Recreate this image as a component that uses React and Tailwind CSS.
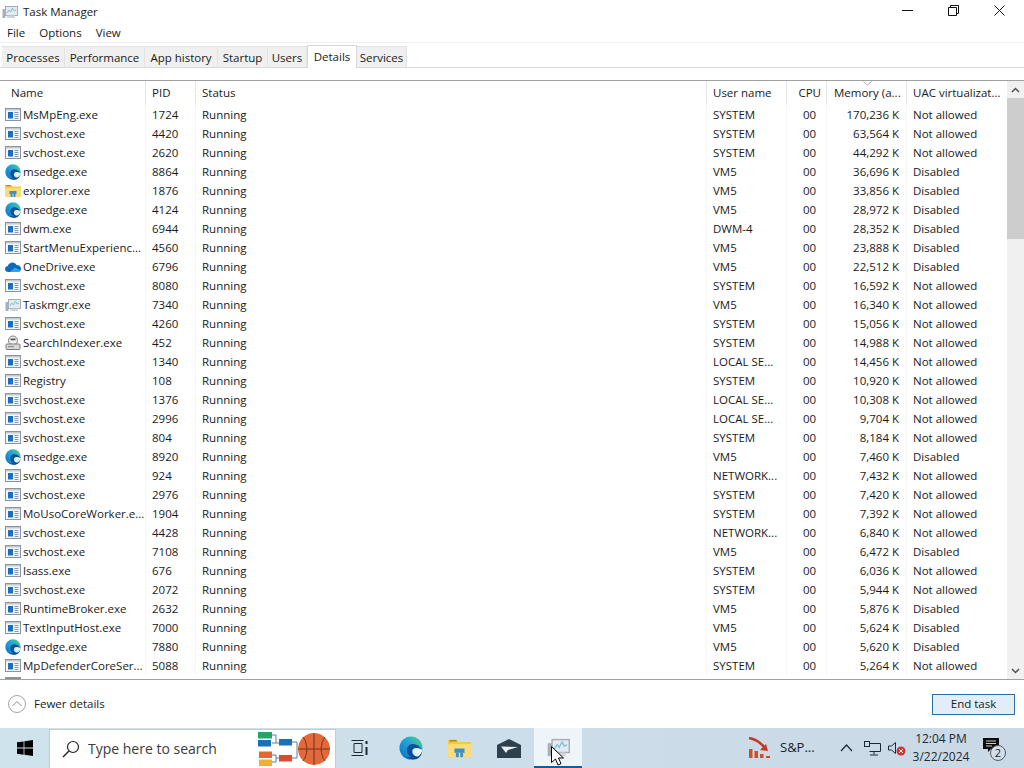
import React from 'react';

const rows = [
  ['MsMpEng.exe', '1724', 'SYSTEM', '170,236 K', 'Not allowed', 'exe'],
  ['svchost.exe', '4420', 'SYSTEM', '63,564 K', 'Not allowed', 'exe'],
  ['svchost.exe', '2620', 'SYSTEM', '44,292 K', 'Not allowed', 'exe'],
  ['msedge.exe', '8864', 'VM5', '36,696 K', 'Disabled', 'edge'],
  ['explorer.exe', '1876', 'VM5', '33,856 K', 'Disabled', 'folder'],
  ['msedge.exe', '4124', 'VM5', '28,972 K', 'Disabled', 'edge'],
  ['dwm.exe', '6944', 'DWM-4', '28,352 K', 'Disabled', 'exe'],
  ['StartMenuExperienc...', '4560', 'VM5', '23,888 K', 'Disabled', 'exe'],
  ['OneDrive.exe', '6796', 'VM5', '22,512 K', 'Disabled', 'cloud'],
  ['svchost.exe', '8080', 'SYSTEM', '16,592 K', 'Not allowed', 'exe'],
  ['Taskmgr.exe', '7340', 'VM5', '16,340 K', 'Not allowed', 'taskmgr'],
  ['svchost.exe', '4260', 'SYSTEM', '15,056 K', 'Not allowed', 'exe'],
  ['SearchIndexer.exe', '452', 'SYSTEM', '14,988 K', 'Not allowed', 'indexer'],
  ['svchost.exe', '1340', 'LOCAL SE...', '14,456 K', 'Not allowed', 'exe'],
  ['Registry', '108', 'SYSTEM', '10,920 K', 'Not allowed', 'exe'],
  ['svchost.exe', '1376', 'LOCAL SE...', '10,308 K', 'Not allowed', 'exe'],
  ['svchost.exe', '2996', 'LOCAL SE...', '9,704 K', 'Not allowed', 'exe'],
  ['svchost.exe', '804', 'SYSTEM', '8,184 K', 'Not allowed', 'exe'],
  ['msedge.exe', '8920', 'VM5', '7,460 K', 'Disabled', 'edge'],
  ['svchost.exe', '924', 'NETWORK...', '7,432 K', 'Not allowed', 'exe'],
  ['svchost.exe', '2976', 'SYSTEM', '7,420 K', 'Not allowed', 'exe'],
  ['MoUsoCoreWorker.e...', '1904', 'SYSTEM', '7,392 K', 'Not allowed', 'exe'],
  ['svchost.exe', '4428', 'NETWORK...', '6,840 K', 'Not allowed', 'exe'],
  ['svchost.exe', '7108', 'VM5', '6,472 K', 'Disabled', 'exe'],
  ['lsass.exe', '676', 'SYSTEM', '6,036 K', 'Not allowed', 'exe'],
  ['svchost.exe', '2072', 'SYSTEM', '5,944 K', 'Not allowed', 'exe'],
  ['RuntimeBroker.exe', '2632', 'VM5', '5,876 K', 'Disabled', 'exe'],
  ['TextInputHost.exe', '7000', 'VM5', '5,624 K', 'Disabled', 'exe'],
  ['msedge.exe', '7880', 'VM5', '5,620 K', 'Disabled', 'edge'],
  ['MpDefenderCoreSer...', '5088', 'SYSTEM', '5,264 K', 'Not allowed', 'exe'],
];

const tabs = [
  ['Processes', 'w-[63px]'],
  ['Performance', 'w-[80px]'],
  ['App history', 'w-[73px]'],
  ['Startup', 'w-[50px]'],
  ['Users', 'w-[39px]'],
  ['Details', 'w-[50px]'],
  ['Services', 'w-[50px]'],
];

const gridCols = 'grid grid-cols-[146px_50px_511px_80px_40px_80px_99px]';

function ExeIcon() {
  return (
    <svg width="16" height="13" viewBox="0 0 16 13">
      <rect x="0.5" y="0.5" width="15" height="12" fill="#f4f6f8" stroke="#8b949e" />
      <rect x="1" y="1" width="14" height="1.5" fill="#c3cad2" />
      <rect x="3" y="4" width="5" height="6.5" fill="#1b6ec2" />
      <path d="M9.5 4.500h4M9.5 6.500h4M9.5 8.500h4M9.5 10.500h4" stroke="#7e9bbc" />
    </svg>
  );
}

function EdgeIcon({ size = 16 }) {
  return (
    <svg width={size} height={size} viewBox="0 0 24 24">
      <defs>
        <linearGradient id="edgeBase" x1="0" y1="1" x2="1" y2="0">
          <stop offset="0" stopColor="#0f6fc0" />
          <stop offset="0.55" stopColor="#1fa3d8" />
          <stop offset="1" stopColor="#58d27a" />
        </linearGradient>
      </defs>
      <circle cx="12" cy="12" r="11.500" fill="url(#edgeBase)" />
      <path d="M8 14c0-4 3-6 6-6 3.500 0 7 2 9 6-3-2-7-3-9-1-2 2-1 6 3 8-4 2-9-1-9-7z" fill="#0d4f9c" />
      <path d="M23.500 14c-3-2-7-3-9-1-2 2-1 6 3 7.500 2.500.500 5-2 6-6.500z" fill="#e4f1f7" />
      <path d="M16 20.500c3 1 5.500-1 7.400-5.500-.8 5-4.400 8.500-8.400 8.500-3 0-6-1-8-3 3 1 6 1 9 0z" fill="#0f4a8c" />
    </svg>
  );
}

function FolderIcon({ size = 16 }) {
  return (
    <svg width={size} height={size} viewBox="0 0 16 16">
      <path d="M0 2h6l1.500 1.500H16V14H0z" fill="#f6c945" />
      <rect x="1" y="2" width="5" height="1.200" fill="#b5892a" />
      <rect x="0" y="5" width="16" height="9" fill="#fbdc7c" />
      <rect x="4.500" y="8" width="7" height="3" fill="#3d8fc6" />
      <rect x="5.500" y="11" width="2" height="3" fill="#3d8fc6" />
      <rect x="8.500" y="11" width="2" height="3" fill="#3d8fc6" />
    </svg>
  );
}

function CloudIcon() {
  return (
    <svg width="16" height="16" viewBox="0 0 16 16">
      <path d="M3.500 13C1.500 13 0 11.700 0 10s1.300-2.900 2.800-3C3.500 5 5.300 3.500 7.500 3.500c1.800 0 3.300 1 4 2.500 2.500-.1 4.500 1.500 4.500 3.700 0 1.900-1.500 3.300-3.500 3.300z" fill="#0f6cbd" />
      <path d="M5 13l5-4.500 5.500 3c-.6 1-1.700 1.500-3 1.500z" fill="#28a8ea" />
    </svg>
  );
}

function TaskmgrIcon({ size = 16 }) {
  return (
    <svg width={size} height={size} viewBox="0 0 16 16">
      <rect x="0.500" y="5" width="3" height="9" fill="#a7afb7" />
      <rect x="3.500" y="2.500" width="12" height="9" fill="#e4ebf0" stroke="#a5aeb7" />
      <path d="M5 9l2-3 1.500 2 2-4 1.500 3 2-1" fill="none" stroke="#7fc3d8" />
      <rect x="5" y="11.500" width="8" height="2.500" fill="#cfd6dc" />
    </svg>
  );
}

function IndexerIcon() {
  return (
    <svg width="16" height="16" viewBox="0 0 16 16">
      <circle cx="8" cy="5.500" r="4.500" fill="#f2f2f2" stroke="#7b7b7b" />
      <rect x="5.500" y="3.500" width="5" height="1.800" fill="#555" />
      <rect x="1" y="9" width="14" height="5.500" rx="1" fill="#d8d8d8" stroke="#7b7b7b" />
      <rect x="3" y="11" width="6" height="1.200" fill="#8d8d8d" />
    </svg>
  );
}

function ProcIcon({ kind }) {
  if (kind === 'edge') return <EdgeIcon />;
  if (kind === 'folder') return <FolderIcon />;
  if (kind === 'cloud') return <CloudIcon />;
  if (kind === 'taskmgr') return <TaskmgrIcon />;
  if (kind === 'indexer') return <IndexerIcon />;
  return <ExeIcon />;
}

function HeaderCell({ children, className = '' }) {
  return (
    <div className={`flex items-center h-full border-r border-[#e5e5e5] whitespace-nowrap ${className}`}>
      {children}
    </div>
  );
}

function Row({ row }) {
  return (
    <div className={`${gridCols} h-[19px] leading-[19px] shrink-0`}>
      <div className="flex items-center pl-[5px] border-r border-[#f6f6f6]">
        <span className="w-[18px] shrink-0 flex items-center justify-start"><ProcIcon kind={row[5]} /></span>
        <span className="whitespace-nowrap">{row[0]}</span>
      </div>
      <div className="pl-[6px] border-r border-[#f6f6f6]">{row[1]}</div>
      <div className="pl-[6px] border-r border-[#f6f6f6]">Running</div>
      <div className="pl-[6px] border-r border-[#f6f6f6] whitespace-nowrap">{row[2]}</div>
      <div className="text-center pl-[6px] border-r border-[#f6f6f6]">00</div>
      <div className="text-right pr-[7px] border-r border-[#f6f6f6]">{row[3]}</div>
      <div className="pl-[6px]">{row[4]}</div>
    </div>
  );
}

function Scrollbar() {
  return (
    <div className="w-[17px] shrink-0 ml-px bg-[#f0f0f0] flex flex-col">
      <div className="h-[17px] flex items-center justify-center">
        <svg width="9" height="6" viewBox="0 0 9 6"><path d="M1 5l3.500-3.500L8 5" fill="none" stroke="#505050" strokeWidth="1.500" /></svg>
      </div>
      <div className="h-[141px] bg-[#cdcdcd]" />
      <div className="flex-1" />
      <div className="h-[17px] flex items-center justify-center">
        <svg width="9" height="6" viewBox="0 0 9 6"><path d="M1 1l3.500 3.500L8 1" fill="none" stroke="#505050" strokeWidth="1.500" /></svg>
      </div>
    </div>
  );
}

function BracketIcon() {
  return (
    <svg width="44" height="34" viewBox="0 0 44 34">
      <rect x="0" y="0" width="14" height="6.500" fill="#2aa36b" />
      <rect x="0" y="8" width="13" height="6.500" fill="#1d6fb8" />
      <rect x="1" y="19.500" width="13" height="6.500" fill="#e8672c" />
      <rect x="1" y="27.500" width="13" height="6.500" fill="#efb02e" />
      <rect x="21" y="7" width="13" height="6.500" fill="#1d6fb8" />
      <rect x="21" y="23" width="13" height="6.500" fill="#e5472f" />
      <path d="M14 3h4v8h3M14 11h4M14 23h4v7h-4M18 26h3M34 10h5v16h-5" fill="none" stroke="#5f7f95" strokeWidth="1" />
    </svg>
  );
}

function BasketballIcon() {
  return (
    <svg width="34" height="34" viewBox="0 0 34 34">
      <circle cx="17" cy="17" r="16" fill="#e2693a" />
      <path d="M1 17h32M17 1v32M6 5c5 6 5 18 0 24M28 5c-5 6-5 18 0 24" fill="none" stroke="#7a3319" strokeWidth="1" />
    </svg>
  );
}

export default function App() {
  return (
    <div className="w-[1024px] h-[768px] overflow-hidden bg-white flex flex-col text-[11.5px] text-[#1a1a1a] relative font-['Open_Sans',sans-serif]">
      {/* title bar */}
      <div className="h-[23px] flex items-center shrink-0">
        <span className="pl-[2px] w-[23px]"><TaskmgrIcon /></span>
        <span>Task Manager</span>
        <div className="flex-1" />
        <div className="flex items-center pr-[2px] pb-[2px]">
          <span className="w-[46px] flex justify-center">
            <svg width="11" height="11" viewBox="0 0 11 11"><path d="M0 5.500h11" stroke="#111" /></svg>
          </span>
          <span className="w-[46px] flex justify-center">
            <svg width="11" height="11" viewBox="0 0 11 11"><path d="M.5 2.500h8v8h-8zM2.500 2.500v-2h8v8h-2" fill="none" stroke="#111" /></svg>
          </span>
          <span className="w-[46px] flex justify-center">
            <svg width="11" height="11" viewBox="0 0 11 11"><path d="M.5.500l10 10M10.500.500l-10 10" stroke="#111" /></svg>
          </span>
        </div>
      </div>

      {/* menu */}
      <div className="h-[20px] flex items-center pl-[7px] gap-[14px] pt-[1px] shrink-0 border-b border-[#f0f0f0]">
        <span>File</span>
        <span>Options</span>
        <span>View</span>
      </div>

      {/* tabs */}
      <div className="h-[25px] shrink-0 flex items-end pl-[2px] border-b border-[#d9d9d9]">
        {tabs.map(([label, width]) =>
          label === 'Details' ? (
            <div key={label} className={`${width} h-[23px] bg-white border border-b-0 border-[#d9d9d9] flex items-start justify-center pt-[2px] -mb-px`}>
              {label}
            </div>
          ) : (
            <div key={label} className={`${width} h-[21px] bg-[#f0f0f0] border-r border-t border-[#e3e3e3] flex items-center justify-center pt-[1px]`}>
              {label}
            </div>
          )
        )}
      </div>

      <div className="h-[12px] shrink-0" />

      {/* process table */}
      <div className="h-[600px] shrink-0 flex border-t border-b border-[#a0a0a0] overflow-hidden">
        <div className="flex-1 flex flex-col overflow-hidden">
          <div className={`${gridCols} h-[24px] shrink-0 relative`}>
            <HeaderCell className="pl-[11px]">Name</HeaderCell>
            <HeaderCell className="pl-[6px]">PID</HeaderCell>
            <HeaderCell className="pl-[6px]">Status</HeaderCell>
            <HeaderCell className="pl-[6px]">User name</HeaderCell>
            <HeaderCell className="justify-end pr-[5px]">CPU</HeaderCell>
            <HeaderCell className="pl-[7px]">Memory (a...</HeaderCell>
            <HeaderCell className="pl-[6px] border-r-0">UAC virtualizat...</HeaderCell>
            <svg className="absolute left-[863px] top-0" width="9" height="5" viewBox="0 0 9 5">
              <path d="M.5.500l4 3.500 4-3.500" fill="none" stroke="#a8a8a8" />
            </svg>
          </div>
          {rows.map((row, i) => <Row key={i} row={row} />)}
          {/* top edge of the next row's icon */}
          <div className="h-[2px] w-[16px] ml-[5px] mt-[2px] bg-[#8b949e] shrink-0" />
        </div>
        <Scrollbar />
      </div>

      {/* footer */}
      <div className="flex-1 flex items-center justify-between pl-[8px] pr-[9px]">
        <div className="flex items-center gap-[8px]">
          <svg width="18" height="18" viewBox="0 0 18 18">
            <circle cx="9" cy="9" r="8.500" fill="none" stroke="#a3a3a3" />
            <path d="M4.500 11L9 6.500l4.500 4.500" fill="none" stroke="#8a8a8a" />
          </svg>
          <span>Fewer details</span>
        </div>
        <button className="w-[83px] h-[21px] bg-[#e1eef8] border border-[#2a6f9e] flex items-center justify-center">End task</button>
      </div>

      {/* taskbar */}
      <div className="h-[40px] shrink-0 flex items-center bg-gradient-to-r from-[#cfe3ec] to-[#c9d9e6] text-[#14212b]">
        <div className="w-[49px] flex justify-center">
          <svg width="16" height="16" viewBox="0 0 16 16" fill="#000">
            <path d="M0 2.300l6.600-.9v6.200H0zM7.400 1.300L16 0v7.600H7.400zM0 8.400h6.600v6.300L0 13.800zM7.400 8.400H16V16l-8.600-1.200z" />
          </svg>
        </div>
        <div className="w-[287px] h-[40px] bg-white border border-[#c4ccd2] flex items-center pl-[11px] mt-px">
          <svg width="18" height="18" viewBox="0 0 18 18" className="mr-[8px] ml-[1px]">
            <circle cx="11" cy="7" r="5.500" fill="none" stroke="#222" strokeWidth="1.200" />
            <path d="M7 11l-6 6" stroke="#222" strokeWidth="1.500" />
          </svg>
          <span className="text-[14px] text-[#3c3c3c] w-[170px] whitespace-nowrap">Type here to search</span>
          <BracketIcon />
          <span className="-ml-[5px]"><BasketballIcon /></span>
        </div>
        <div className="w-[48px] flex justify-center">
          <svg width="18" height="18" viewBox="0 0 18 18" fill="none" stroke="#1d2a33">
            <path d="M.5 1.500h12M.5 16.500h12M3 4.500h8v9H3z" />
            <path d="M15.500 2v3M15.500 8v8" strokeWidth="2" />
          </svg>
        </div>
        <div className="w-[54px] flex justify-center"><EdgeIcon size={24} /></div>
        <div className="w-[42px] flex justify-center"><FolderIcon size={23} /></div>
        <div className="w-[54px] pl-[4px] flex justify-center">
          <svg width="24" height="19" viewBox="0 0 24 19">
            <path d="M0 6L12 0l12 6v13H0z" fill="#2e3f4d" />
            <path d="M4 7.500L21 8 11 11l-2 3z" fill="#e8eef2" />
          </svg>
        </div>
        <div className="w-[48px] h-[40px] bg-[#eef5f9] border-b-[2px] border-[#0e5f9f] flex items-center justify-center">
          <TaskmgrIcon size={23} />
        </div>
        <div className="flex-1" />
        <div className="flex items-center">
          <svg width="24" height="22" viewBox="0 0 24 22" className="mr-[8px]">
            <path d="M1 1c6 1 12 5 16 10" fill="none" stroke="#c23b22" strokeWidth="2.500" />
            <path d="M12 13l8 1-2-7z" fill="#c23b22" />
            <rect x="1" y="12" width="3.500" height="9" fill="#c8502f" />
            <rect x="6.500" y="14" width="3.500" height="7" fill="#c8502f" />
            <rect x="12" y="17" width="3.500" height="4" fill="#c8502f" />
            <rect x="18" y="19" width="4" height="2" fill="#c8502f" />
          </svg>
          <span className="text-[13px] w-[60px]">S&amp;P...</span>
          <svg width="13" height="8" viewBox="0 0 13 8" className="mr-[11px]">
            <path d="M1 7l5.500-6L12 7" fill="none" stroke="#1d2a33" strokeWidth="1.200" />
          </svg>
          <svg width="17" height="15" viewBox="0 0 17 15" fill="none" stroke="#1d2a33" className="mr-[7px]">
            <path d="M5.500 2.500h11v8h-11M10 10.500v3M6 14h8" />
            <rect x="0.500" y="0.500" width="5" height="5" />
          </svg>
          <svg width="18" height="15" viewBox="0 0 18 15" className="mr-[5px]">
            <path d="M.5 5h3l4-3.500v11L3.500 9h-3z" fill="none" stroke="#1d2a33" />
            <circle cx="13" cy="10" r="4.500" fill="#d03434" />
            <path d="M11 8l4 4M15 8l-4 4" stroke="#fff" />
          </svg>
          <div className="w-[60px] text-center leading-[18px] text-[#1d2a33] text-[12px]">
            <div>12:04 PM</div>
            <div>3/22/2024</div>
          </div>
          <div className="w-[53px] pl-[12px] pr-[8px] relative h-[30px] flex items-center">
            <svg width="16" height="15" viewBox="0 0 16 15" className="mb-[6px]">
              <path d="M0 0h16v11H8l-3 3v-3H0z" fill="#0c0c0c" />
              <path d="M3 3h10M3 5.500h10M3 8h6" stroke="#fff" strokeWidth="0.800" />
            </svg>
            <span className="absolute left-[19px] top-[12px] w-[16px] h-[16px] rounded-full bg-[#d3dee6] border border-[#5a5a5a] text-[11px] leading-[14px] text-center">2</span>
          </div>
        </div>
      </div>

      {/* mouse pointer */}
      <svg className="absolute left-[551px] top-[746px]" width="13" height="21" viewBox="0 0 13 21">
        <path d="M.5.500v16l4-3.500 2.500 6 3-1.300-2.500-5.700h5z" fill="#fff" stroke="#000" />
      </svg>
    </div>
  );
}
